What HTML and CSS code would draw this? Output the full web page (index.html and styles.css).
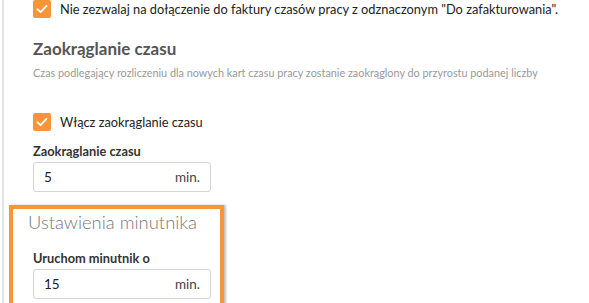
FILE: index.html
```html
<!DOCTYPE html>
<html lang="pl">
<head>
    <meta charset="UTF-8">
    <title>Ustawienia czasu pracy</title>
    <link rel="stylesheet" href="styles.css">
</head>
<body>
    <div class="panel">
        <label class="check-row first">
            <span class="checkbox"><svg viewBox="0 0 18 18" width="18" height="18"><path d="M4.5 9.3 L7.6 12.2 L13.5 5.8" fill="none" stroke="#fff" stroke-width="1.8" stroke-linecap="round" stroke-linejoin="round"/></svg></span>
            <span>Nie zezwalaj na dołączenie do faktury czasów pracy z odznaczonym "Do zafakturowania".</span>
        </label>

        <h2 class="section-title">Zaokrąglanie czasu</h2>
        <p class="section-desc">Czas podlegający rozliczeniu dla nowych kart czasu pracy zostanie zaokrąglony do przyrostu podanej liczby</p>

        <label class="check-row second">
            <span class="checkbox"><svg viewBox="0 0 18 18" width="18" height="18"><path d="M4.5 9.3 L7.6 12.2 L13.5 5.8" fill="none" stroke="#fff" stroke-width="1.8" stroke-linecap="round" stroke-linejoin="round"/></svg></span>
            <span>Włącz zaokrąglanie czasu</span>
        </label>

        <div class="field">
            <div class="field-label">Zaokrąglanie czasu</div>
            <div class="input-box">
                <span>5</span>
                <span class="unit">min.</span>
            </div>
        </div>

        <div class="highlight">
            <h3 class="timer-title">Ustawienia minutnika</h3>
            <div class="field">
                <div class="field-label">Uruchom minutnik o</div>
                <div class="input-box">
                    <span>15</span>
                    <span class="unit">min.</span>
                </div>
            </div>
        </div>
    </div>
</body>
</html>
```

FILE: styles.css
```css
body {
    margin: 0;
    padding: 0;
    font-family: Lato, "Noto Sans", sans-serif;
    color: #222;
    background-color: #fff;
    overflow: hidden;
}

.panel {
    margin-left: 2px;
    border-left: 2px solid #e2e2e2;
    padding-left: 29px;
    height: 303px;
}

.check-row {
    display: flex;
    align-items: center;
    gap: 9px;
    font-size: 12.8px;
    white-space: nowrap;
}

.check-row.first {
    height: 18px;
}

.check-row.second {
    margin-top: 32px;
}

.checkbox {
    display: block;
    width: 18px;
    height: 18px;
    border-radius: 2px;
    background-color: #f7953a;
    flex-shrink: 0;
}

.checkbox svg {
    display: block;
}

.section-title {
    margin: 19px 0 0 0;
    font-size: 17px;
    font-weight: 700;
    color: #555;
    line-height: 24px;
}

.section-desc {
    margin: 4px 0 0 0;
    font-size: 10.85px;
    color: #999;
    line-height: 16px;
    white-space: nowrap;
}

.field {
    margin-top: 11px;
}

.field-label {
    font-size: 12.8px;
    font-weight: 700;
    color: #333;
    line-height: 18px;
}

.input-box {
    display: flex;
    justify-content: space-between;
    align-items: center;
    width: 178px;
    height: 30px;
    box-sizing: border-box;
    margin-top: 2px;
    padding: 0 10px 0 10px;
    border: 1px solid #d4d4d4;
    border-radius: 3px;
    font-size: 13.5px;
    color: #222;
}

.unit {
    color: #444;
}

.highlight {
    margin-top: 13px;
    margin-left: -24px;
    width: 215px;
    box-sizing: border-box;
    border: 4px solid #f7953a;
    padding: 0 0 10px 15px;
    box-shadow: 2px 0 2px rgba(0, 0, 0, 0.25);
}

.highlight .field {
    margin-left: 5px;
    margin-top: 16px;
}

.timer-title {
    margin: 2px 0 0 0;
    font-size: 18.4px;
    font-weight: 300;
    color: #777;
    line-height: 22px;
}
```
